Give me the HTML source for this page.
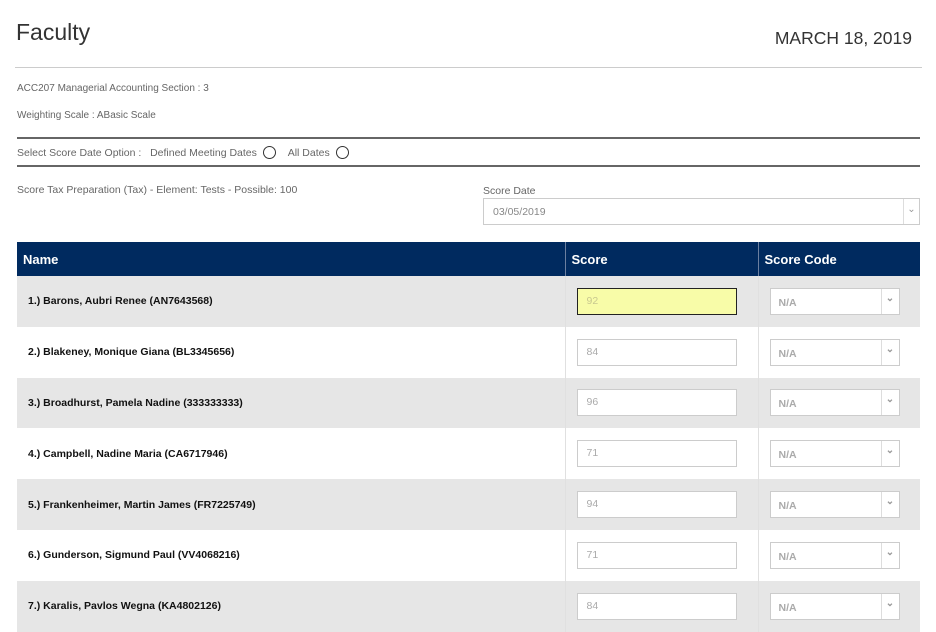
<!DOCTYPE html>
<html><head><style>
body{margin:0;width:936px;height:611px;overflow:hidden;background:#fff;font-family:"Liberation Sans",Arial,sans-serif;position:relative}
.a{position:absolute;white-space:nowrap}
.sm{font-size:10.5px;color:#666}
.hr{position:absolute;left:17px;width:903px}
table{position:absolute;left:17px;top:242px;width:903px;border-collapse:collapse;table-layout:fixed}
th{background:#002a5f;color:#fff;text-align:left;font-size:13px;height:34px;padding:0 0 0 6px;font-weight:bold}
th+th{border-left:1px solid #6b7fa0}
td{height:50.8px;padding:0;font-size:10.5px;font-weight:bold;color:#111}
td.n{padding-left:11px}
td+td{border-left:1px solid #e0e0e0}
tr.g td{background:#e6e6e6}
.inp{margin-left:11px;border:1px solid #ccc;background:#fff;font-weight:normal;color:#aaa;line-height:25px;padding-left:9px;box-sizing:border-box;width:160px;height:27px}
.sel{margin-left:11px;width:130px;height:27px;border:1px solid #ccc;background:#fff;box-sizing:border-box;position:relative;color:#aaa;line-height:28px;padding-left:8px}
.sel:after{content:"⌄";position:absolute;right:0;top:0;width:17px;height:25px;border-left:1px solid #ddd;text-align:center;line-height:20px;font-size:10px;color:#999}
.rad{display:inline-block;width:11px;height:11px;border:1px solid #333;border-radius:50%;vertical-align:-3px;margin:0 6px 0 6px}
</style></head><body>
<div class="a" style="left:16px;top:19px;font-size:23px;color:#333">Faculty</div>
<div class="a" style="right:24px;top:28px;font-size:17.5px;color:#333">MARCH 18, 2019</div>
<div class="hr" style="top:67px;border-top:1px solid #ccc;left:15px;width:907px"></div>
<div class="a sm" style="left:17px;top:83px;font-size:10px">ACC207 Managerial Accounting Section : 3</div>
<div class="a sm" style="left:17px;top:110px;font-size:10px">Weighting Scale : ABasic Scale</div>
<div class="hr" style="top:137px;border-top:2px solid #666"></div>
<div class="a sm" style="left:17px;top:146px">Select Score Date Option : &nbsp; Defined Meeting Dates<span class="rad"></span> &nbsp;All Dates<span class="rad"></span></div>
<div class="hr" style="top:165px;border-top:2px solid #666"></div>
<div class="a sm" style="left:17px;top:184px">Score Tax Preparation (Tax) - Element: Tests - Possible: 100</div>
<div class="a sm" style="left:483px;top:185px">Score Date</div>
<div class="a" style="left:483px;top:198px;width:437px;height:27px;border:1px solid #ccc;box-sizing:border-box;font-size:10.5px;color:#888;line-height:27px;padding-left:9px">03/05/2019<span style="position:absolute;right:0;top:0;width:15px;height:25px;border-left:1px solid #ddd;text-align:center;line-height:22px;font-size:10px;color:#999">⌄</span></div>
<table>
<colgroup><col style="width:548px"><col style="width:193px"><col></colgroup>
<tr><th>Name</th><th>Score</th><th>Score Code</th></tr>
<tr class="g"><td class="n">1.) Barons, Aubri Renee (AN7643568)</td><td><div class="inp" style="background:#f8fca8;border:1px solid #222;color:#c8c890">92</div></td><td><div class="sel">N/A</div></td></tr>
<tr><td class="n">2.) Blakeney, Monique Giana (BL3345656)</td><td><div class="inp">84</div></td><td><div class="sel">N/A</div></td></tr>
<tr class="g"><td class="n">3.) Broadhurst, Pamela Nadine (333333333)</td><td><div class="inp">96</div></td><td><div class="sel">N/A</div></td></tr>
<tr><td class="n">4.) Campbell, Nadine Maria (CA6717946)</td><td><div class="inp">71</div></td><td><div class="sel">N/A</div></td></tr>
<tr class="g"><td class="n">5.) Frankenheimer, Martin James (FR7225749)</td><td><div class="inp">94</div></td><td><div class="sel">N/A</div></td></tr>
<tr><td class="n">6.) Gunderson, Sigmund Paul (VV4068216)</td><td><div class="inp">71</div></td><td><div class="sel">N/A</div></td></tr>
<tr class="g"><td class="n">7.) Karalis, Pavlos Wegna (KA4802126)</td><td><div class="inp">84</div></td><td><div class="sel">N/A</div></td></tr>
</table>
</body></html>
